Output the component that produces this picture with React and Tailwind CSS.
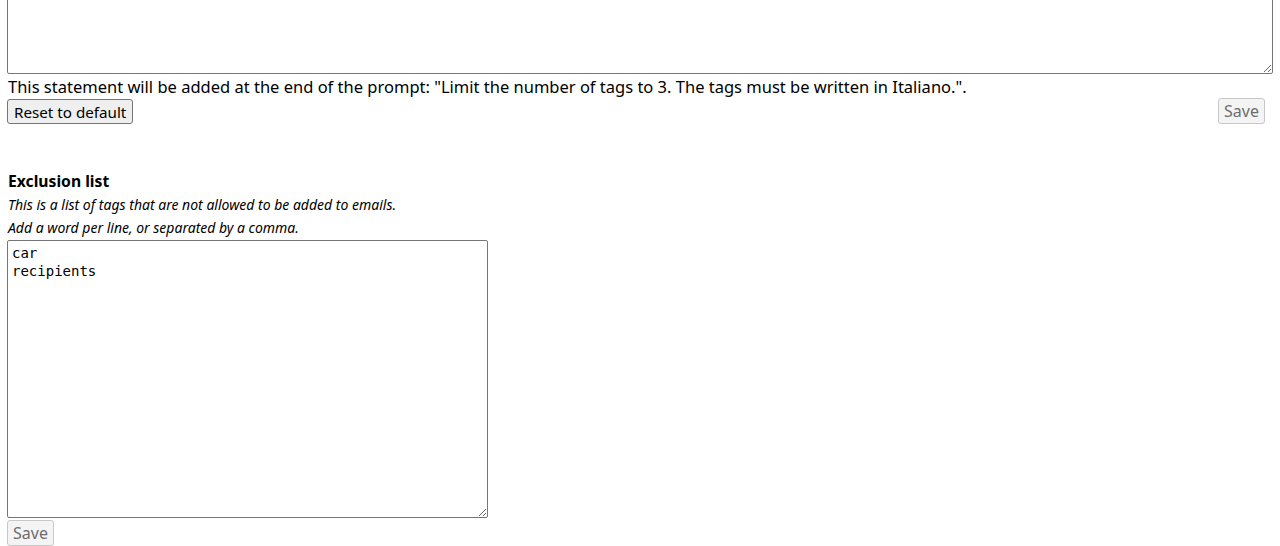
export default function App() {
  const sans = { fontFamily: '"Noto Sans", "Open Sans", sans-serif' };
  return (
    <div className="px-[7px] text-black bg-white" style={sans}>
      <div className="-mt-[20px] relative">
        <textarea
          className="block w-full h-[94px] border border-[#767676] rounded-[2px] bg-white resize-y"
          defaultValue=""
        />
      </div>
      <div className="text-[16.5px] leading-[24px] mt-[1px] pl-[1px]">
        This statement will be added at the end of the prompt: "Limit the number of tags to 3. The tags must be written in Italiano.".
      </div>
      <div className="flex justify-between items-start pr-[8px]">
        <button className="h-[25px] px-[6px] text-[15.2px] leading-[20px] border border-[#767676] rounded-[3px] bg-[#efefef] text-black">
          Reset to default
        </button>
        <button disabled className="h-[26px] px-[5px] -mt-[1px] text-[16px] leading-[20px] border border-[#c8c8c8] rounded-[3px] bg-[#f4f4f4] text-[#6d6d6d]">
          Save
        </button>
      </div>
      <div className="mt-[46px] font-bold text-[15.7px] leading-[22px] pl-[1px]">Exclusion list</div>
      <div className="italic text-[14px] leading-[23px] mt-[1px] pl-[1px]">This is a list of tags that are not allowed to be added to emails.</div>
      <div className="italic text-[14px] leading-[23px] pl-[1px]">Add a word per line, or separated by a comma.</div>
      <textarea
        className="block w-[481px] h-[278px] mt-[1px] border border-[#767676] rounded-[2px] px-[4px] py-[3px] text-[14px] leading-[18px] resize-y"
        style={{ fontFamily: '"DejaVu Sans Mono", "Liberation Mono", monospace' }}
        defaultValue={"car\nrecipients"}
      />
      <button disabled className="mt-[2px] h-[26px] px-[5px] text-[16px] leading-[20px] border border-[#c8c8c8] rounded-[3px] bg-[#f4f4f4] text-[#6d6d6d]">
        Save
      </button>
    </div>
  );
}
